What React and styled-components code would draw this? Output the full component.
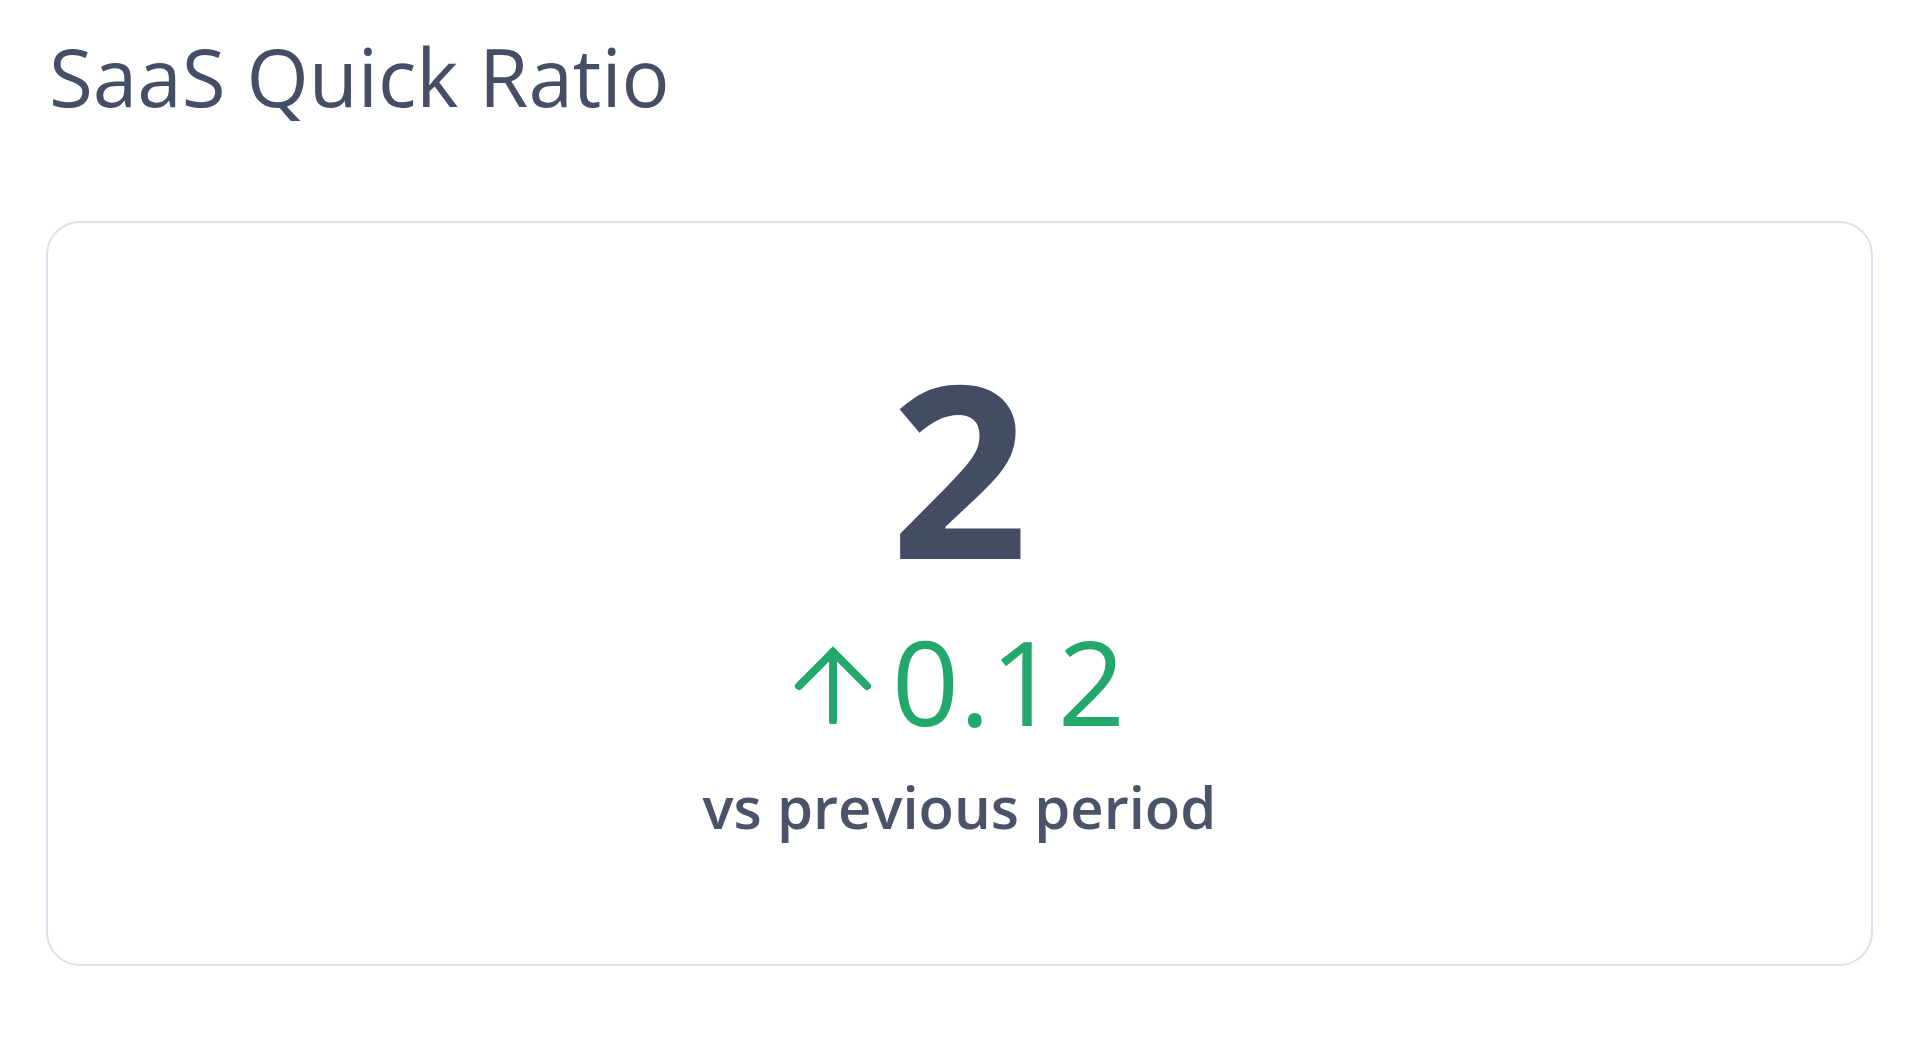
import React from "react";
import styled, { createGlobalStyle } from "styled-components";

const GlobalStyle = createGlobalStyle`
  html, body {
    margin: 0;
    padding: 0;
    background: #ffffff;
  }
  body {
    font-family: "Open Sans", "Noto Sans", sans-serif;
    -webkit-font-smoothing: antialiased;
  }
`;

const Page = styled.div`
  padding: 36px 47px 0 46px;
`;

const Title = styled.h2`
  margin: 0 0 105px 3px;
  font-size: 80px;
  line-height: 1;
  font-weight: 400;
  color: #454e65;
`;

const Card = styled.div`
  display: flex;
  flex-direction: column;
  align-items: center;
  padding: 122px 0 128px;
  border: 2px solid #dde1ef;
  border-radius: 34px;
`;

const Value = styled.div`
  font-size: 241px;
  line-height: 1;
  font-weight: 700;
  color: #434c63;
`;

const Delta = styled.div`
  display: flex;
  align-items: center;
  gap: 20px;
  margin-top: 36px;
  font-size: 118px;
  line-height: 1;
  font-weight: 400;
  color: ${(p) => (p.$up ? "#22a86a" : "#e0474c")};

  svg {
    margin-top: 8px;
  }
`;

const Caption = styled.div`
  margin-top: 38px;
  font-size: 58px;
  line-height: 1;
  font-weight: 600;
  color: #4b5369;
`;

const ArrowUp = () => (
  <svg width="78" height="78" viewBox="0 0 78 78" fill="none" stroke="currentColor" strokeWidth="8" strokeLinecap="round" strokeLinejoin="miter">
    <path d="M39 75V6" />
    <path d="M5 40 39 6l34 34" />
  </svg>
);

export default function App() {
  return (
    <>
      <GlobalStyle />
      <Page>
        <Title>SaaS Quick Ratio</Title>
        <Card>
          <Value>2</Value>
          <Delta $up>
            <ArrowUp />
            <span>0.12</span>
          </Delta>
          <Caption>vs previous period</Caption>
        </Card>
      </Page>
    </>
  );
}
